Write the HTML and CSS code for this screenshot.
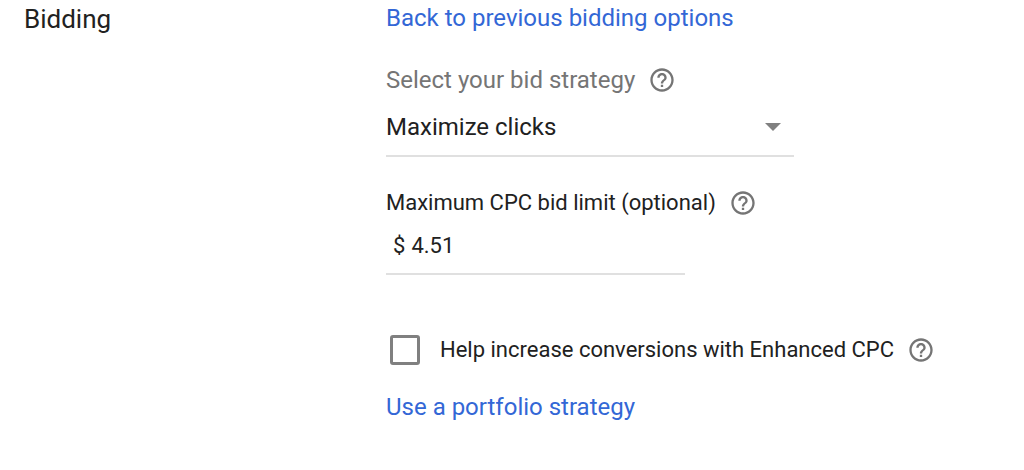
FILE: index.html
```html
<!DOCTYPE html>
<html lang="en">
<head>
    <meta charset="utf-8">
    <title>Bidding</title>
    <link rel="stylesheet" href="styles.css">
</head>
<body>
    <svg class="sprite" aria-hidden="true">
        <symbol id="help" viewBox="0 0 24 24">
            <path d="M11 18h2v-2h-2v2zm1-16C6.48 2 2 6.48 2 12s4.480 10 10 10 10-4.480 10-10S17.520 2 12 2zm0 18c-4.410 0-8-3.590-8-8s3.590-8 8-8 8 3.590 8 8-3.590 8-8 8zm0-14c-2.210 0-4 1.790-4 4h2c0-1.100.9-2 2-2s2 .9 2 2c0 2-3 1.750-3 5h2c0-2.250 3-2.500 3-5 0-2.210-1.790-4-4-4z"/>
        </symbol>
    </svg>
    <form class="bidding">
        <h2 class="title">Bidding</h2>
        <div class="options">
            <a href="#" class="link">Back to previous bidding options</a>
            <div class="field strategy">
                <div class="row">
                    <label for="strategy" class="hint">Select your bid strategy</label>
                    <button type="button" class="help" aria-label="Help"><svg><use href="#help"/></svg></button>
                </div>
                <div class="select">
                    <select id="strategy">
                        <option>Maximize clicks</option>
                    </select>
                </div>
            </div>
            <div class="field limit">
                <div class="row">
                    <label for="limit">Maximum CPC bid limit (optional)</label>
                    <button type="button" class="help" aria-label="Help"><svg><use href="#help"/></svg></button>
                </div>
                <div class="money">
                    <span>$</span>
                    <input type="text" id="limit" value="4.51">
                </div>
            </div>
            <div class="row enhanced">
                <input type="checkbox" id="enhanced">
                <label for="enhanced">Help increase conversions with Enhanced CPC</label>
                <button type="button" class="help" aria-label="Help"><svg><use href="#help"/></svg></button>
            </div>
            <a href="#" class="link">Use a portfolio strategy</a>
        </div>
    </form>
</body>
</html>
```

FILE: styles.css
```css
*{
    box-sizing: border-box;
    margin: 0;
    padding: 0;
}
body{
    background-color: #fff;
    color: #212121;
    font: 22px/28px Roboto, Arial, sans-serif;
}
.sprite{
    display: none;
}
.bidding{
    display: grid;
    grid-template-columns: 362px 1fr;
    padding: 4px 24px;
}
.title{
    font-size: 26px;
    font-weight: 400;
    line-height: 30px;
}
.link{
    display: block;
    color: #3367d6;
    font-size: 24px;
    text-decoration: none;
}
.row{
    display: flex;
    align-items: center;
    gap: 13px;
}
.help{
    width: 28px;
    height: 28px;
    border: 0;
    background: none;
    cursor: pointer;
}
.help svg{
    display: block;
    width: 28px;
    height: 28px;
    fill: #757575;
}
.hint{
    color: #757575;
    font-size: 24px;
}
.strategy{
    max-width: 408px;
    margin-top: 34px;
}
.select{
    position: relative;
    margin-top: 5px;
    border-bottom: 2px solid #e0e0e0;
}
.select::after{
    content: "";
    position: absolute;
    right: 13px;
    top: 24px;
    border: 8px solid transparent;
    border-top-color: #808080;
    border-bottom: 0;
    pointer-events: none;
}
.select select{
    display: block;
    width: 100%;
    height: 56px;
    border: 0;
    background: none;
    color: inherit;
    font: inherit;
    font-size: 24px;
    appearance: none;
    outline: none;
}
.limit{
    margin-top: 32px;
}
.money{
    display: flex;
    max-width: 299px;
    gap: 6px;
    margin-top: 8px;
    padding: 7px 7px 13px;
    border-bottom: 2px solid #e0e0e0;
}
.money input{
    flex: 1;
    min-width: 0;
    border: 0;
    background: none;
    color: inherit;
    font: inherit;
    outline: none;
}
.enhanced{
    margin: 60px 0 28px;
    padding-left: 4px;
}
.enhanced input{
    width: 30px;
    height: 30px;
    margin-right: 7px;
    border: 3px solid #808080;
    border-radius: 3px;
    appearance: none;
}
.enhanced input:checked{
    background-color: #3367d6;
}
```
